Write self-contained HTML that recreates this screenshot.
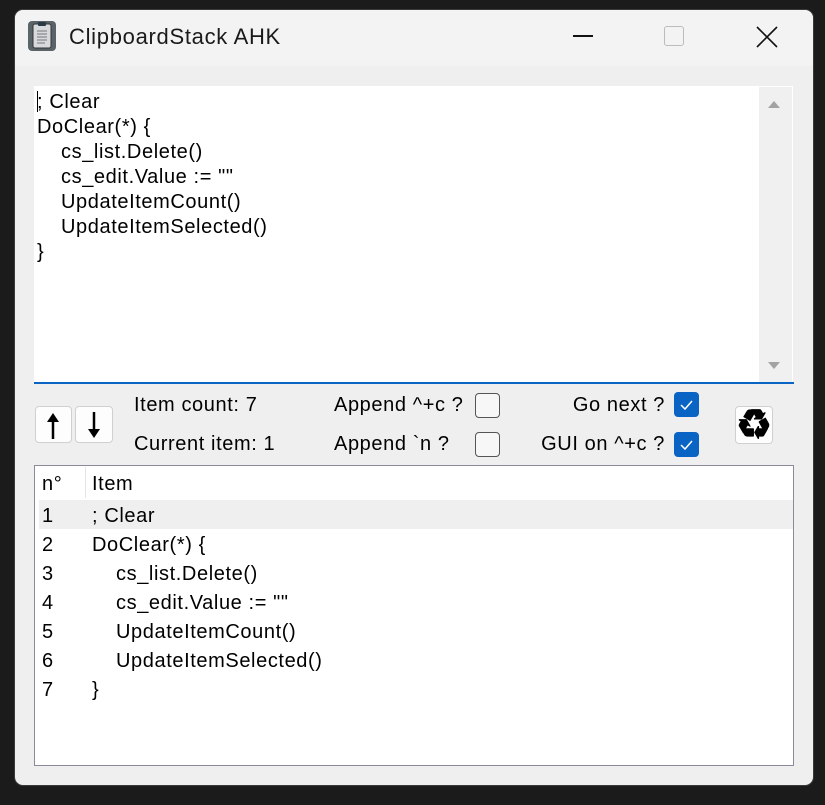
<!DOCTYPE html>
<html><head><meta charset="utf-8"><style>
*{margin:0;padding:0;box-sizing:border-box}
body{width:825px;height:805px;background:#1b1b1b;position:relative;overflow:hidden;font-family:"Liberation Sans",sans-serif;color:#000}
.win{position:absolute;left:14px;top:9px;width:800px;height:777px;background:#efefef;border-radius:9px;border:1px solid #3a3a3a;overflow:hidden}
.title{position:absolute;left:0;top:0;width:100%;height:56px;background:#f3f3f3}
.abs{position:absolute}
.t{font-size:20px;letter-spacing:0.6px;white-space:pre;position:absolute}
.t div.i{padding-left:24px}
.r{text-align:right}
.cb{position:absolute;width:25px;height:25px;border-radius:4px}
.cb.off{border:1.5px solid #555;background:#f7f7f7}
.cb.on{background:#0a64c4}
.btn{position:absolute;background:#fdfdfd;border:1px solid #d0d0d0;border-radius:4px}
</style></head><body>
<div class="win">
<div class="title"></div>
</div>
<svg class="abs" style="left:27px;top:20px" width="30" height="32" viewBox="0 0 30 32">
<rect x="1" y="1" width="28" height="30" rx="4" fill="#5a6368"/>
<rect x="6" y="4" width="18" height="24" rx="2" fill="#d6dadd" stroke="#333" stroke-width="1"/>
<rect x="11" y="2" width="8" height="4" rx="1" fill="#2a3a44"/>
<g stroke="#777" stroke-width="1"><line x1="10" y1="11" x2="20" y2="11"/><line x1="10" y1="14" x2="20" y2="14"/><line x1="10" y1="17" x2="20" y2="17"/><line x1="10" y1="20" x2="20" y2="20"/><line x1="10" y1="23" x2="18" y2="23"/></g>
</svg>
<div class="t" style="left:69px;top:24px;font-size:22px;letter-spacing:0.7px;color:#1a1a1a">ClipboardStack AHK</div>
<div class="abs" style="left:573px;top:35px;width:20px;height:1.5px;background:#111"></div>
<div class="abs" style="left:664px;top:26px;width:20px;height:20px;border:1.5px solid #bbb;border-radius:3px"></div>
<svg class="abs" style="left:756px;top:26px" width="22" height="22"><path d="M1 1L21 21M21 1L1 21" stroke="#111" stroke-width="1.6"/></svg>
<div class="abs" style="left:34px;top:86px;width:759px;height:297px;background:#fff"></div>
<div class="abs" style="left:759px;top:87px;width:33px;height:296px;background:#f0f0f0"></div>
<svg class="abs" style="left:767px;top:99px" width="14" height="10"><path d="M1 9L7 2L13 9Z" fill="#a3a3a3"/></svg>
<svg class="abs" style="left:767px;top:361px" width="14" height="10"><path d="M1 1L7 8L13 1Z" fill="#a3a3a3"/></svg>
<div class="abs" style="left:34px;top:382px;width:760px;height:2px;background:#0a64c4"></div>
<div class="abs" style="left:37px;top:91px;width:1px;height:21px;background:#000"></div>
<div class="t" style="left:37px;top:90px;line-height:25px"><div>; Clear</div><div>DoClear(*) {</div><div class="i">cs_list.Delete()</div><div class="i">cs_edit.Value := ""</div><div class="i">UpdateItemCount()</div><div class="i">UpdateItemSelected()</div><div>}</div></div>
<div class="btn" style="left:35px;top:406px;width:37px;height:37px"></div>
<div class="btn" style="left:75px;top:406px;width:38px;height:37px"></div>
<svg class="abs" style="left:45px;top:412px" width="16" height="28"><path d="M8 6V27" stroke="#000" stroke-width="2.5"/><path d="M2 10L8 1L14 10Z" fill="#000"/></svg>
<svg class="abs" style="left:86px;top:411px" width="16" height="28"><path d="M8 1V21" stroke="#000" stroke-width="2.5"/><path d="M2 18L8 27L14 18Z" fill="#000"/></svg>
<div class="t" style="left:134px;top:394px">Item count: 7</div>
<div class="t" style="left:134px;top:433px">Current item: 1</div>
<div class="t" style="left:334px;top:394px">Append ^+c ?</div>
<div class="t" style="left:334px;top:433px">Append `n ?</div>
<div class="cb off" style="left:475px;top:393px"></div>
<div class="cb off" style="left:475px;top:432px"></div>
<div class="t r" style="left:500px;width:165px;top:394px">Go next ?</div>
<div class="t r" style="left:500px;width:165px;top:433px">GUI on ^+c ?</div>
<div class="cb on" style="left:674px;top:392px"><svg width="25" height="25"><path d="M7 13L11 17L18 9" stroke="#fff" stroke-width="1.5" fill="none"/></svg></div>
<div class="cb on" style="left:674px;top:432px"><svg width="25" height="25"><path d="M7 13L11 17L18 9" stroke="#fff" stroke-width="1.5" fill="none"/></svg></div>
<div class="btn" style="left:735px;top:406px;width:38px;height:38px"></div>
<div class="abs" style="left:734px;top:403px;width:40px;height:44px;font-size:40px;line-height:44px;text-align:center;font-family:'DejaVu Sans',sans-serif;font-weight:bold;-webkit-text-stroke:1.5px #000">♻</div>
<div class="abs" style="left:34px;top:465px;width:760px;height:301px;background:#fff;border:1px solid #8a8a9a"></div>
<div class="abs" style="left:85px;top:467px;width:1px;height:31px;background:#e5e5e5"></div>
<div class="t" style="left:42px;top:473px">n°</div>
<div class="t" style="left:92px;top:473px">Item</div>
<div class="abs" style="left:39px;top:500px;width:754px;height:29px;background:#efefef"></div>
<div class="t" style="left:42px;top:502px;line-height:29px">1
2
3
4
5
6
7</div>
<div class="t" style="left:92px;top:502px;line-height:29px"><div>; Clear</div><div>DoClear(*) {</div><div class="i">cs_list.Delete()</div><div class="i">cs_edit.Value := ""</div><div class="i">UpdateItemCount()</div><div class="i">UpdateItemSelected()</div><div>}</div></div>
</body></html>
